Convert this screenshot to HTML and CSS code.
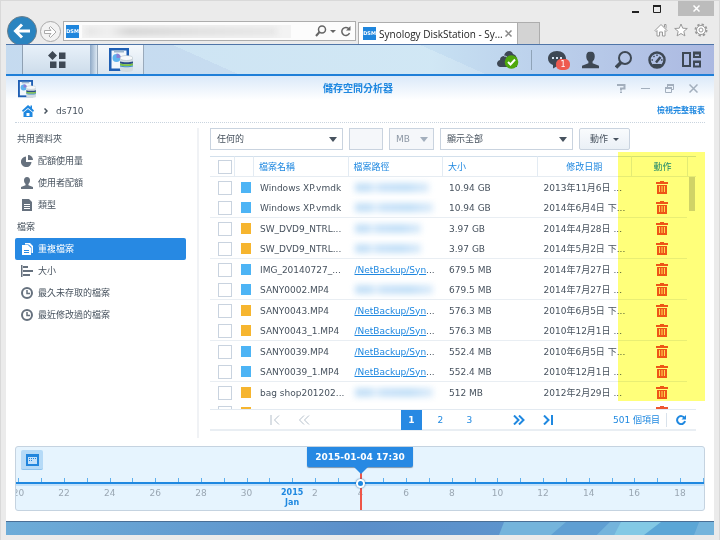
FILE: index.html
```
<!DOCTYPE html>
<html lang="zh-Hant">
<head>
    <meta charset="UTF-8">
    <meta name="viewport" content="width=device-width, initial-scale=1.0">
    <title>Synology DiskStation</title>
    <link rel="stylesheet" href="styles.css">
</head>
<body>
    <!-- shared icons -->
    <svg class="sprite" aria-hidden="true">
        <symbol id="i-app" viewBox="0 0 24 24">
            <path fill="#1f5fb4" d="M0 0h20v23H0z"/>
            <path fill="#f3f8fc" d="M2.500 2.500h15v18h-15z"/>
            <path fill="#9db6cf" d="M5 2.500h10v2H5z"/>
            <circle cx="7.500" cy="10" r="4" fill="#5fb4ee"/>
            <path fill="#8b7fd6" d="M7.500 10V5.500a4.500 4.500 0 0 1 4.500 4.500z"/>
            <path fill="#d3dce2" d="M11 10v12c0 2.600 13 2.600 13 0V10z"/>
            <path fill="#2c4d86" d="M11 13.500c3 1 10 1 13 0v2c-3 1-10 1-13 0z"/>
            <path fill="#7cc142" d="M11 15.500c3 1 10 1 13 0v2c-3 1-10 1-13 0z"/>
            <path fill="#3f8fd0" d="M11 17.500c3 1 10 1 13 0v1c-3 1-10 1-13 0z"/>
            <ellipse cx="17.500" cy="10" rx="6.500" ry="2.500" fill="#f7f9fa" stroke="#a9b6bf" stroke-width=".5"/>
        </symbol>
        <symbol id="i-trash" viewBox="0 0 12 13">
            <path fill="#ee5530" d="M4 0h4v1h4v2H0V1h4zM1 4h10v9H1z"/>
            <path stroke="#ffd9a8" stroke-width="1" d="M3.500 5v6M6 5v6M8.500 5v6"/>
        </symbol>
        <symbol id="i-user" viewBox="0 0 18 18">
            <path d="M9 0c3 0 4.500 2 4.500 5 0 2.500-1 4.500-2.300 5.500v2L18 15v3H0v-3l6.800-2.500v-2C5.500 9.500 4.500 7.500 4.500 5c0-3 1.500-5 4.500-5z"/>
        </symbol>
        <symbol id="i-clock" viewBox="0 0 12 12">
            <circle cx="6" cy="6" r="5" fill="none" stroke="currentColor" stroke-width="2"/>
            <path d="M6 3v3.500h3" fill="none" stroke="currentColor" stroke-width="1.500"/>
        </symbol>
    </svg>

    <header class="titlebar">
        <button class="win-btn" aria-label="minimize"><svg width="7" height="12"><path fill="#222" d="M0 8h7v2H0z"/></svg></button>
        <button class="win-btn" aria-label="maximize"><svg width="8" height="8"><path fill="none" stroke="#222" d="M.5 1v6.500h7V1"/><path fill="#222" d="M0 0h8v2H0z"/></svg></button>
        <button class="win-btn win-close" aria-label="close"><svg width="7" height="7"><path stroke="#fff" stroke-width="1.500" d="M.5.500l6 6M6.500.500l-6 6"/></svg></button>
    </header>

    <nav class="browser">
        <button class="back" aria-label="back">
            <svg width="18" height="16" viewBox="0 0 18 16"><path fill="none" stroke="#fff" stroke-width="3" d="M17 8H3M9 1.500L2.500 8 9 14.500"/></svg>
        </button>
        <button class="forward" aria-label="forward">
            <svg width="13" height="12" viewBox="0 0 13 12"><path fill="#fff" stroke="#aaa" d="M.5 4.500H7L5 2l1.500-1.500L12 6l-5.500 5.500L5 10l2-2.500H.500z"/></svg>
        </button>
        <div class="address">
            <span class="dsm-icon">DSM</span>
            <span class="url-blur"><i></i></span>
            <svg class="addr-tools" width="36" height="12" viewBox="0 0 36 12" fill="none" stroke="#666">
                <circle cx="7" cy="4.500" r="3.500" stroke-width="1.500"/><path stroke-width="2" d="M4.500 7L1 11"/>
                <path fill="#666" stroke="none" d="M15 5h6l-3 3z"/>
                <path stroke-width="1.500" d="M34 4a4 4 0 1 0 .500 4"/><path fill="#666" stroke="none" d="M35.500 1v4.500H31z"/>
            </svg>
        </div>
        <div class="tab">
            <span class="dsm-icon">DSM</span>
            <span class="tab-title">Synology DiskStation - Sy...</span>
            <svg width="7" height="7"><path stroke="#888" stroke-width="1.500" d="M.5.500l6 6M6.500.500l-6 6"/></svg>
        </div>
        <button class="new-tab" aria-label="new tab"></button>
        <div class="browser-icons">
            <svg width="14" height="14" viewBox="0 0 14 14" fill="#fff" stroke="#999"><path d="M1 7.500l6-6 6 6-1 1-1-1V13H8.500V9h-3v4H3V7.500l-1 1zM10.500 4V1.500h1.500V5.500"/></svg>
            <svg width="14" height="14" viewBox="0 0 14 14" fill="#fff" stroke="#999"><path d="M7 1l1.700 4.200 4.600.3-3.500 2.900 1.100 4.500L7 10.500l-3.900 2.400 1.100-4.500L.7 5.500l4.600-.3z"/></svg>
            <svg width="14" height="14" viewBox="0 0 14 14" fill="none" stroke="#999"><circle cx="7" cy="7" r="5.500" stroke-width="2" stroke-dasharray="2.300 2"/><circle cx="7" cy="7" r="4.500" fill="#fff"/><circle cx="7" cy="7" r="2"/></svg>
        </div>
    </nav>

    <div class="dsm">
        <div class="taskbar">
            <button class="main-menu" aria-label="main menu">
                <svg width="18" height="18" viewBox="0 0 18 18" fill="#3e4854"><path d="M4.500 0L9 4.500 4.500 9 0 4.500zM11 1.500h6.500V8H11zM2 10.500h6.500V17H2zM11 10.500h6.500V17H11z"/></svg>
            </button>
            <span class="task-gap"></span>
            <button class="task-app" aria-label="儲存空間分析器"><svg width="24" height="24"><use href="#i-app"/></svg></button>
            <div class="tray">
                <svg width="22" height="19" viewBox="0 0 22 19"><path fill="#3e4854" d="M3 17c-4-1-4-6 0-7 0-3 2-4 4-4 1-5 7-7 9-2 3 1 4 3 4 7v6z"/><path fill="none" stroke="#c9dcef" d="M7 6c2 0 3 1 4 2"/><circle cx="14.500" cy="12" r="6.800" fill="#4ea80d"/><path fill="none" stroke="#fff" stroke-width="2" d="M11 12l2.500 2.500L18 9.500"/></svg>
                <span class="tray-sep"></span>
                <span class="chat">
                    <svg width="18" height="18" viewBox="0 0 18 18"><path fill="#3e4854" d="M9 0c5 0 9 3 9 7.500S14 15 9.500 15L5 17.500V14C2 13 0 10.500 0 7.500 0 3 4 0 9 0z"/><path stroke="#d7e4f2" stroke-width="2" stroke-dasharray="2 2" d="M4 7h10"/></svg>
                    <b>1</b>
                </span>
                <svg width="17" height="18" viewBox="0 0 18 18" fill="#3e4854"><use href="#i-user"/></svg>
                <svg width="17" height="18" viewBox="0 0 17 18" fill="none" stroke="#3e4854"><circle cx="10" cy="7" r="6" stroke-width="2"/><path stroke-width="3.500" d="M6 11.500l-5 5"/></svg>
                <svg width="18" height="18" viewBox="0 0 18 18" fill="none" stroke="#3e4854"><circle cx="9" cy="9" r="7.500" stroke-width="2.500"/><path stroke-width="2.500" d="M8 11.500l4.500-5.500"/><path stroke-width="1.500" d="M3.500 9H5M5.500 5l1 1M9 3.500V5M13 9h1.500"/><path fill="#3e4854" stroke="none" d="M4 13h10l-2.500 3h-5z"/></svg>
                <svg width="19" height="17" viewBox="0 0 19 17" fill="none" stroke="#3e4854" stroke-width="2"><path d="M1 2h7v13H1zM12 1.500h6v4.500h-6zM12 10.500h6V15.500h-6z"/><path d="M11 2.500h8M11 11h8"/></svg>
            </div>
        </div>

        <main class="app">
            <div class="app-head">
                <svg width="18" height="18"><use href="#i-app"/></svg>
                <h1>儲存空間分析器</h1>
                <div class="app-btns">
                    <button aria-label="help"><svg width="9" height="9" fill="none" stroke="#a3afbd" stroke-width="2"><path d="M0 1h7.500v3.500H4V6.500M4 7.500V9"/></svg></button>
                    <button aria-label="minimize"><svg width="9" height="9"><path fill="#a3afbd" d="M0 4h9v1H0z"/></svg></button>
                    <button aria-label="restore"><svg width="9" height="9" fill="none" stroke="#a3afbd"><path d="M2.500 3V.500h6v5H7M.5 3.500h6v5h-6z"/><path stroke-width="2" d="M0 4h7M2 1h7"/></svg></button>
                    <button aria-label="close"><svg width="9" height="9"><path stroke="#a3afbd" stroke-width="1.500" d="M.5.500l8 8M8.500.500l-8 8"/></svg></button>
                </div>
            </div>
            <div class="crumbs">
                <svg width="12" height="12" viewBox="0 0 12 12"><path fill="#1f88e0" d="M6 0l2.500 2V.500H10V3.500L12 5.500 11 7 6 3 1 7 0 5.500zM1.500 7.500L6 4l4.500 3.500V12h-9z"/><path fill="#fff" d="M4.500 8h3v3h-3z"/></svg>
                <svg width="4" height="6"><path fill="none" stroke="#47525e" stroke-width="1.500" d="M.5.500L3 3 .5 5.500"/></svg>
                <span>ds710</span>
                <a href="#report">檢視完整報表</a>
            </div>

            <div class="content">
                <aside class="sidebar">
                    <h2>共用資料夾</h2>
                    <ul>
                        <li><a href="#quota"><svg width="12" height="12" viewBox="0 0 12 12"><path d="M5 1.500V7h5.500A5.300 5.300 0 1 1 5 1.500z"/><path d="M7 0a5 5 0 0 1 5 5H7z"/></svg>配額使用量</a></li>
                        <li><a href="#user"><svg width="12" height="12"><use href="#i-user"/></svg>使用者配額</a></li>
                        <li><a href="#type"><svg width="12" height="12" viewBox="0 0 12 12"><path d="M1 0h7l3 3v9H1z"/><path stroke="#fff" d="M3 5.500h6M3 7.500h6M3 9.500h6"/></svg>類型</a></li>
                    </ul>
                    <h2>檔案</h2>
                    <ul>
                        <li><a href="#dup" class="active"><svg width="12" height="12" viewBox="0 0 12 12"><path d="M4 0h5l3 3v7h-1.500V4L7.500 1.500H4z"/><path d="M1 2h6l3 3v7H1z"/><path stroke="#2789e3" d="M3 7.500h5M3 9.500h5"/></svg>重複檔案</a></li>
                        <li><a href="#size"><svg width="12" height="12" viewBox="0 0 12 12"><path d="M0 0h1.500v12H0zM2 1h5v2H2zM2 5h10v2H2zM2 9h7v2H2z"/></svg>大小</a></li>
                        <li><a href="#old"><svg width="12" height="12"><use href="#i-clock"/></svg>最久未存取的檔案</a></li>
                        <li><a href="#new"><svg width="12" height="12"><use href="#i-clock"/></svg>最近修改過的檔案</a></li>
                    </ul>
                </aside>

                <section class="files">
                    <div class="filters">
                        <label class="pick wide"><select aria-label="大小條件"><option>任何的</option></select></label>
                        <input type="text" class="amount" aria-label="大小" disabled>
                        <label class="pick unit"><select aria-label="單位" disabled><option>MB</option></select></label>
                        <label class="pick wide"><select aria-label="顯示"><option>顯示全部</option></select></label>
                        <button class="action">動作</button>
                    </div>

                    <div class="grid">
                        <table>
                            <colgroup>
                                <col class="c-check"><col class="c-color"><col><col><col><col><col class="c-act"><col class="c-scroll">
                            </colgroup>
                            <thead>
                                <tr>
                                    <th><input type="checkbox" aria-label="全選"></th>
                                    <th></th>
                                    <th>檔案名稱</th>
                                    <th>檔案路徑</th>
                                    <th>大小</th>
                                    <th class="mid">修改日期</th>
                                    <th class="act">動作</th>
                                    <th></th>
                                </tr>
                            </thead>
                            <tbody id="rows"></tbody>
                        </table>
                        <span class="thumb"></span>
                    </div>

                    <div class="pager">
                        <div class="pager-first">
                            <button disabled aria-label="first"><svg width="10" height="10"><path d="M1 0v10M9 .5L4.500 5 9 9.500"/></svg></button>
                            <button disabled aria-label="previous"><svg width="12" height="10"><path d="M6 .5L1.500 5 6 9.500M11 .5L6.500 5l4.500 4.500"/></svg></button>
                        </div>
                        <div class="pages">
                            <button class="current">1</button>
                            <button>2</button>
                            <button>3</button>
                        </div>
                        <div class="pager-last">
                            <button aria-label="next"><svg width="12" height="10"><path d="M1 .5L5.500 5 1 9.500M6 .5L10.500 5 6 9.500"/></svg></button>
                            <button aria-label="last"><svg width="10" height="10"><path d="M1 .5L5.500 5 1 9.500M9 0v10"/></svg></button>
                        </div>
                        <span class="total">501 個項目</span>
                        <button class="reload" aria-label="reload"><svg width="10" height="10"><path d="M8.500 3A4 4 0 1 0 9 6"/><path class="fill" d="M10 0v4.500H5.500z"/></svg></button>
                    </div>
                    <span class="marker"></span>
                </section>
            </div>

            <section class="timeline">
                <button class="calendar" aria-label="calendar">
                    <svg width="13" height="12"><path fill="#2286dd" d="M0 0h13v12H0z"/><path fill="#c3e1fa" d="M2 3h9v7H2z"/><path stroke="#2286dd" stroke-dasharray="1 1" d="M3 4.500h7M3 6.500h4"/></svg>
                </button>
                <div class="ticks" id="ticks"></div>
                <span class="now-line"></span>
                <span class="now-dot"></span>
                <span class="tip">2015-01-04 17:30</span>
            </section>
        </main>
        <svg class="wallpaper" viewBox="0 0 708 13" preserveAspectRatio="none">
            <defs><linearGradient id="sea"><stop offset="0" stop-color="#6dacd8"/><stop offset=".5" stop-color="#5b8fca"/><stop offset="1" stop-color="#5e9ad1"/></linearGradient></defs>
            <path fill="url(#sea)" d="M0 0h708v13H0z"/>
            <path fill="#74b4dc" d="M498 0h106l-12 13h-99z"/>
            <path fill="#5f9fd3" d="M560 0h44l-13 13h-46z"/>
            <path fill="#74b4dc" d="M604 0h12l-8 13h-17z"/>
            <path fill="#83c9e5" d="M615 0h60l-8 13h-59z"/>
            <path fill="#5ba6d6" d="M655 0h38l-5 13h-50z"/>
            <path fill="#74b4dc" d="M693 0h15v13h-20z"/>
        </svg>
    </div>

    <script>
        // color, name, path (a number = hidden path of that size), size, date
        const files = [
            ["blue", "Windows XP.vmdk", 2, "10.94 GB", "2013年11月6日 ..."],
            ["blue", "Windows XP.vmdk", 3, "10.94 GB", "2014年6月4日 下..."],
            ["orange", "SW_DVD9_NTRL...", 1, "3.97 GB", "2014年4月28日 ..."],
            ["orange", "SW_DVD9_NTRL...", 1, "3.97 GB", "2014年5月2日 下..."],
            ["blue", "IMG_20140727_...", "/NetBackup/Syn", "679.5 MB", "2014年7月27日 ..."],
            ["blue", "SANY0002.MP4", 3, "679.5 MB", "2014年7月27日 ..."],
            ["orange", "SANY0043.MP4", "/NetBackup/Syn", "576.3 MB", "2010年6月5日 下..."],
            ["orange", "SANY0043_1.MP4", "/NetBackup/Syn", "576.3 MB", "2010年12月1日 ..."],
            ["blue", "SANY0039.MP4", "/NetBackup/Syn", "552.4 MB", "2010年6月5日 下..."],
            ["blue", "SANY0039_1.MP4", "/NetBackup/Syn", "552.4 MB", "2010年12月1日 ..."],
            ["orange", "bag shop201202...", 3, "512 MB", "2012年2月29日 ..."],
            ["orange", "", "", "", ""]
        ];
        document.getElementById("rows").innerHTML = files.map(([color, name, path, size, date]) => {
            let cell = "";
            if (typeof path === "number") cell = `<span class="hidden-path p${path}"></span>`;
            else if (path) cell = `<a href="#path">${path}</a>...`;
            return `<tr>
                <td><input type="checkbox" aria-label="${name}"></td>
                <td><span class="swatch ${color}"></span></td>
                <td>${name}</td><td>${cell}</td><td>${size}</td><td class="date">${date}</td>
                <td class="act"><button aria-label="刪除"><svg width="12" height="13"><use href="#i-trash"/></svg></button></td>
                <td></td>
            </tr>`;
        }).join("");

        // one cell per day, Dec 20 - Jan 19
        const labels = {0: "20", 2: "22", 4: "24", 6: "26", 8: "28", 10: "30", 12: "<b>2015<br>Jan</b>"};
        for (let day = 2; day <= 18; day += 2) labels[day + 11] = day;
        let html = "";
        for (let i = 0; i < 31; i++) html += `<span>${labels[i] || ""}</span>`;
        document.getElementById("ticks").innerHTML = html;
    </script>
</body>
</html>
```

FILE: styles.css
```
* {
    box-sizing: border-box;
}
body {
    margin: 0;
    padding: 0 5px 5px;
    min-height: 100vh;
    border: 1px solid #d9d9d9;
    background-color: #ebebeb;
    font-family: "DejaVu Sans", "Noto Sans CJK TC", sans-serif;
    font-size: 9px;
    line-height: 12px;
    color: #47525e;
}
button {
    display: flex;
    align-items: center;
    justify-content: center;
    padding: 0;
    border: 0;
    background: none;
    font: inherit;
    color: inherit;
}
a {
    color: #1f88e0;
}
svg {
    display: block;
    flex: none;
}
.sprite {
    position: absolute;
    width: 0;
    height: 0;
}

/* browser */
.titlebar {
    display: flex;
    justify-content: flex-end;
    height: 15px;
}
.win-btn {
    width: 22px;
    height: 15px;
}
.win-close {
    width: 36px;
    margin-left: 10px;
    background-color: #bcbcbc;
}
.browser {
    display: flex;
    align-items: flex-start;
    height: 28px;
    overflow: hidden;
}
.back {
    flex: none;
    width: 30px;
    height: 30px;
    margin-left: 1px;
    border-radius: 50%;
    border: 1px solid #6b7f8c;
    background-color: #2a84c0;
}
.forward {
    flex: none;
    width: 21px;
    height: 21px;
    margin: 5px 2px 0 3px;
    border: 1px solid #aaa;
    border-radius: 50%;
    background-color: #f2f2f2;
}
.address {
    flex: 1;
    display: flex;
    align-items: center;
    height: 20px;
    margin: 5px 2px 0 0;
    padding: 0 4px 0 2px;
    border: 1px solid #adadad;
    background-color: #fcfcfc;
}
.dsm-icon {
    flex: none;
    width: 13px;
    height: 13px;
    background-color: #1f86dd;
    color: #fff;
    font-size: 5px;
    font-weight: bold;
    line-height: 13px;
    text-align: center;
}
.url-blur {
    flex: 1;
    height: 13px;
    margin: 0 24px 0 3px;
    overflow: hidden;
    background-color: #f3f3f3;
}
.url-blur i {
    display: block;
    height: 7px;
    margin: 3px 14px 0 4px;
    background: linear-gradient(to right, #e0e0e0, #eee 12%, #cfcfcf 22%, #dcdcdc 60%, #e4e4e4);
    filter: blur(3px);
}
.tab {
    flex: none;
    display: flex;
    align-items: center;
    width: 160px;
    height: 22px;
    margin-top: 6px;
    padding: 0 5px 0 4px;
    border: 1px solid #adadad;
    border-bottom: 0;
    background-color: #fff;
}
.tab-title {
    flex: 1;
    margin-left: 3px;
    font-family: "Open Sans", sans-serif;
    font-size: 10px;
    line-height: 16px;
    color: #222;
    white-space: nowrap;
}
.new-tab {
    flex: none;
    width: 22px;
    height: 22px;
    margin-top: 6px;
    border: 1px solid #adadad;
    border-width: 1px 1px 0 0;
    background-color: #d3d3d3;
}
.browser-icons {
    display: flex;
    gap: 6px;
    margin: 7px 6px 0 114px;
}

/* dsm desktop */
.taskbar {
    display: flex;
    height: 32px;
    border-top: 1px solid #4f75a8;
    border-bottom: 2px solid #1f7fd8;
    background: linear-gradient(to right, rgba(190, 215, 238, .3), rgba(200, 228, 243, .2) 60%, rgba(160, 168, 218, .7)), linear-gradient(24deg, #c8dcf0 30%, #d3e8f5 30%, #d3e8f5 62%, #c6dff2 62%);
    padding-left: 16px;
}
.main-menu {
    width: 68px;
    border-left: 1px solid #8fa0b2;
    background: linear-gradient(#e8f1f9, #cddceb);
}
.task-gap {
    width: 7px;
    background: linear-gradient(to right, #8fa9c6, #dce8f3);
}
.task-app {
    width: 47px;
    border: 1px solid #9aaabb;
    border-width: 0 1px;
    background: linear-gradient(#f4f8fc, #d9e5f0);
}
.tray {
    display: flex;
    align-items: center;
    gap: 16px;
    margin-left: auto;
    padding-right: 13px;
}
.tray > svg:first-child {
    margin-right: -4px;
}
.tray-sep {
    width: 1px;
    height: 20px;
    background-color: #8fa3b8;
}
.chat {
    position: relative;
}
.chat b {
    position: absolute;
    right: -4px;
    bottom: -1px;
    width: 14px;
    height: 11px;
    border-radius: 5px;
    background-color: #ee5a4f;
    color: #fff;
    font-size: 8px;
    font-weight: normal;
    line-height: 11px;
    text-align: center;
}
.wallpaper {
    width: 100%;
    height: 13px;
}

/* app window */
.app {
    padding: 0 9px 10px;
    background: linear-gradient(#dbe9f9, #fff 24px);
    border-bottom: 1px solid #4a6f96;
}
.app-head {
    display: grid;
    grid-template-columns: 1fr auto 1fr;
    align-items: center;
    height: 25px;
    padding: 0 7px 0 3px;
}
.app-head h1 {
    margin: 0;
    font-size: 10px;
    line-height: 14px;
    color: #1f88e0;
}
.app-btns {
    display: flex;
    justify-content: flex-end;
    gap: 15px;
}
.crumbs {
    display: flex;
    align-items: center;
    gap: 8px;
    height: 22px;
    padding: 0 0 2px 7px;
    border-bottom: 1px dotted #c9d4df;
}
.crumbs svg + svg {
    margin-left: 2px;
}
.crumbs a {
    margin-left: auto;
    font-size: 8px;
    font-weight: bold;
    text-decoration: none;
}
.content {
    display: flex;
    gap: 11px;
    padding: 5px 9px 8px 0;
}
.sidebar {
    flex: none;
    width: 184px;
    min-height: 310px;
    padding-right: 11px;
    border-right: 2px solid #f0f2f5;
}
.sidebar h2 {
    margin: 0;
    padding-left: 2px;
    font-size: 9px;
    font-weight: normal;
    line-height: 22px;
}
.sidebar ul {
    margin: 0;
    padding: 0;
    list-style: none;
}
.sidebar a {
    display: flex;
    align-items: center;
    gap: 5px;
    height: 22px;
    padding-left: 6px;
    border-radius: 2px;
    color: #47525e;
    text-decoration: none;
}
.sidebar svg {
    color: #66717e;
    fill: #66717e;
}
.sidebar .active {
    background-color: #2789e3;
    color: #fff;
}
.sidebar .active svg {
    fill: #fff;
}

/* file list */
.files {
    position: relative;
    flex: 1;
    min-width: 0;
}
.filters {
    display: flex;
    gap: 6px;
    height: 22px;
    margin-bottom: 6px;
}
.pick {
    position: relative;
}
.wide {
    width: 133px;
}
.unit {
    width: 45px;
}
.pick::after {
    content: "";
    position: absolute;
    top: 9px;
    right: 6px;
    border: 4px solid transparent;
    border-top: 5px solid #47525e;
    border-bottom: 0;
    pointer-events: none;
}
.unit::after {
    border-top-color: #a3afbd;
}
select {
    appearance: none;
    width: 100%;
    height: 22px;
    padding: 0 6px;
    border: 1px solid #c9d3df;
    border-radius: 0;
    background-color: #fff;
    font: inherit;
    color: #47525e;
}
select:disabled {
    background-color: #f5f7fa;
    color: #8d98a5;
    opacity: 1;
}
.amount {
    width: 34px;
    height: 22px;
    border: 1px solid #c9d3df;
    background-color: #f5f7fa;
}
.action {
    gap: 5px;
    width: 51px;
    border: 1px solid #c9d3df;
    border-radius: 2px;
    background: linear-gradient(#f9fbfd, #eaf0f6);
}
.action::after {
    content: "";
    border: 3px solid transparent;
    border-top-color: #47525e;
    border-bottom: 0;
}
.grid {
    position: relative;
    height: 253px;
    overflow: hidden;
}
table {
    width: 100%;
    table-layout: fixed;
    border-collapse: separate;
    border-spacing: 0;
}
.c-check {
    width: 24px;
}
.c-color {
    width: 19px;
}
.c-act {
    width: 56px;
}
.c-scroll {
    width: 9px;
}
th, td {
    overflow: hidden;
    padding: 0 0 0 7px;
    text-align: left;
    white-space: nowrap;
}
th {
    height: 21px;
    border-top: 1px solid #d3e0ec;
    border-bottom: 1px solid #e6ecf2;
    border-left: 1px solid #e3ebf3;
    padding-left: 5px;
    font-weight: normal;
    color: #1f88e0;
}
th:first-child {
    padding-left: 8px;
    border-left: 0;
}
td {
    height: 21px;
}
td:first-child {
    padding-left: 8px;
}
tr:nth-child(even) td {
    height: 20px;
    border-bottom: 1px solid #e9eef3;
}
tr td:last-child {
    border-bottom: 0;
}
.mid {
    text-align: center;
    padding-left: 0;
}
.act {
    padding-left: 6px;
    text-align: center;
}
.act button {
    margin: 0 auto;
}
.files input[type="checkbox"] {
    appearance: none;
    display: block;
    width: 14px;
    height: 14px;
    margin: 0;
    border: 1px solid #c9d3df;
    background-color: #fff;
}
.swatch {
    display: block;
    width: 10px;
    height: 11px;
}
.blue {
    background-color: #4db4f5;
}
.orange {
    background-color: #f6b52f;
}
.hidden-path {
    display: block;
    width: 74px;
    height: 9px;
    background: linear-gradient(to right, #c4e0f7 20%, #e4f0fb 26%, #c9e2f8 34%, #c0def7 70%, #dcecfa);
    filter: blur(3px);
}
.p1 {
    width: 66px;
}
.p3 {
    width: 78px;
}
.thumb {
    position: absolute;
    top: 21px;
    right: 1px;
    width: 6px;
    height: 34px;
    background-color: #d0d3d7;
}
.marker {
    position: absolute;
    top: 24px;
    right: -9px;
    width: 87px;
    height: 249px;
    background-color: #ffff7a;
    mix-blend-mode: multiply;
    pointer-events: none;
}

/* pager */
.pager {
    display: flex;
    align-items: center;
    height: 22px;
    border-top: 1px solid #e3eaf1;
    border-bottom: 2px solid #e9eef3;
    padding-left: 60px;
    color: #1f88e0;
}
.pager path {
    fill: none;
    stroke: #1f88e0;
    stroke-width: 2px;
}
.pager :disabled path {
    stroke: #b4bfca;
    stroke-width: 1px;
}
.pager .fill {
    fill: #1f88e0;
    stroke: none;
}
.pager-first, .pages, .pager-last {
    display: flex;
}
.pager-first, .pager-last {
    gap: 18px;
}
.pages {
    gap: 8px;
    margin: 0 33px 0 auto;
}
.pages button {
    width: 21px;
    height: 20px;
}
.pages .current {
    background-color: #2789e3;
    color: #fff;
    font-weight: bold;
}
.total {
    margin-left: 60px;
    padding-right: 6px;
    border-right: 1px solid #d9e2eb;
    line-height: 14px;
}
.reload {
    margin: 0 10px 0 9px;
}

/* timeline */
.timeline {
    position: relative;
    height: 65px;
    overflow: hidden;
    border: 1px solid #c5d3e0;
    border-radius: 3px;
    background-color: #e6f4fe;
}
.calendar {
    width: 22px;
    height: 20px;
    margin: 3px 0 0 5px;
    border-bottom: 1px solid #8fc4ee;
    border-radius: 2px;
    background-color: #b5daf7;
}
.ticks {
    display: flex;
    margin: 12px -10px 0 -9px;
    border-top: 2px solid #1f88e0;
    box-shadow: inset 0 2px #c3e1fa;
}
.ticks span {
    position: relative;
    flex: 1 0 0;
    width: 0;
    display: flex;
    justify-content: center;
    padding-top: 4px;
    text-align: center;
    line-height: 10px;
    color: #9aa7b3;
}
.ticks span::before {
    content: "";
    position: absolute;
    top: -6px;
    left: 50%;
    width: 1px;
    height: 4px;
    background-color: #5fb0ee;
}
.ticks b {
    color: #1f88e0;
    font-size: 8px;
}
.now-line {
    position: absolute;
    top: 20px;
    bottom: 0;
    left: 50%;
    width: 2px;
    background-color: #ee5548;
}
.now-dot {
    position: absolute;
    top: 32px;
    left: 50%;
    width: 9px;
    height: 9px;
    margin-left: -4px;
    border: 2px solid #fff;
    border-radius: 50%;
    background-color: #1f88e0;
    box-shadow: 0 0 2px #1f5f99;
}
.tip {
    position: absolute;
    top: 0;
    left: 50%;
    width: 106px;
    margin-left: -53px;
    border-radius: 0 0 2px 2px;
    background-color: #2789e3;
    box-shadow: 0 1px 1px #7c94ab;
    color: #fff;
    font-weight: bold;
    line-height: 20px;
    text-align: center;
}
.tip::after {
    content: "";
    position: absolute;
    top: 20px;
    left: 50%;
    margin-left: -6px;
    border: 7px solid transparent;
    border-top-color: #2789e3;
    border-bottom: 0;
}
```
